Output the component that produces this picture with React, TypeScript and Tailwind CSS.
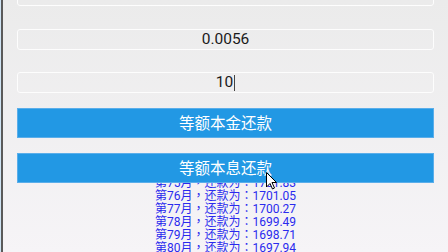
import React from "react";

const rows = [
  ["75", "1701.83"],
  ["76", "1701.05"],
  ["77", "1700.27"],
  ["78", "1699.49"],
  ["79", "1698.71"],
  ["80", "1697.94"],
  ["81", "1697.16"],
];

function Field({ value, cursor, className }: { value: string; cursor?: boolean; className?: string }) {
  return (
    <div
      className={`h-[21px] rounded-[3px] border border-[#fdfdfd] flex items-center justify-center text-[15.5px] text-[#1a1a1a] ${className ?? ""}`}
      style={{ fontFamily: "Roboto, 'Noto Sans', sans-serif" }}
    >
      <span className="leading-none">{value}</span>
      {cursor && <span className="ml-[1px] w-[1px] h-[16px] bg-[#444]" />}
    </div>
  );
}

export default function App() {
  return (
    <div
      className="relative w-[448px] h-[252px] overflow-hidden flex bg-linear-to-b from-[#ebebeb] to-[#f6f4f7]"
      style={{ fontFamily: "Roboto, 'Noto Sans CJK SC', sans-serif" }}
    >
      <div className="w-[3px] h-full flex">
        <div className="w-[1px] h-full bg-[#cfe3f3]" />
        <div className="w-[2px] h-full bg-[#5a5a5a]" />
      </div>
      <div className="flex flex-col pl-[14px] w-[431px]">
        <Field value="200000" className="-mt-[15px]" />
        <Field value="0.0056" className="mt-[23px]" />
        <Field value="10" cursor className="mt-[22px]" />
        <div
          className="mt-[15px] h-[30px] bg-[#2298e4] border border-[#5aaeea] flex items-center justify-center text-white text-[15.5px]"
          style={{ fontFamily: "'Noto Sans CJK SC', sans-serif" }}
        >
          等额本金还款
        </div>
        <div
          className="mt-[15px] h-[30px] bg-[#2298e4] border border-[#5aaeea] flex items-center justify-center text-white text-[15.5px]"
          style={{ fontFamily: "'Noto Sans CJK SC', sans-serif" }}
        >
          等额本息还款
        </div>
        <div className="flex-1 overflow-hidden">
          <div className="-mt-[6px] flex flex-col items-center text-[12px] text-[#2a2aee]">
            {rows.map(([m, v]) => (
              <div
                key={m}
                className="h-[13px] leading-[13px] whitespace-nowrap"
                style={{ fontFamily: "Roboto, 'Noto Sans CJK TC', sans-serif" }}
              >
                第{m}月，还款为：{v}
              </div>
            ))}
          </div>
        </div>
      </div>
      <svg
        className="absolute left-[266px] top-[172px]"
        width="12"
        height="18"
        viewBox="0 0 12 18"
      >
        <path
          d="M0.5 0.5 L0.5 15 L4 11.5 L6.5 17 L8.5 16 L6 10.5 L10.5 10.5 Z"
          fill="white"
          stroke="black"
          strokeWidth="1"
          strokeLinejoin="round"
        />
      </svg>
    </div>
  );
}
